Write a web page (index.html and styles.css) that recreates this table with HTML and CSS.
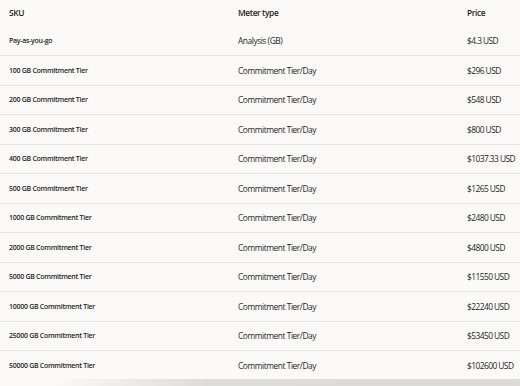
FILE: index.html
```html
<!DOCTYPE html>
<html>
<head>
<meta charset="utf-8">
<link rel="stylesheet" href="styles.css">
</head>
<body>
<div class="table">
  <div class="row head"><div class="c sku">SKU</div><div class="c meter">Meter type</div><div class="c price">Price</div></div>
  <div class="row first"><div class="c sku">Pay-as-you-go</div><div class="c meter">Analysis (GB)</div><div class="c price">$4.3 USD</div></div>
  <div class="row"><div class="c sku">100 GB Commitment Tier</div><div class="c meter">Commitment Tier/Day</div><div class="c price">$296 USD</div></div>
  <div class="row"><div class="c sku">200 GB Commitment Tier</div><div class="c meter">Commitment Tier/Day</div><div class="c price">$548 USD</div></div>
  <div class="row"><div class="c sku">300 GB Commitment Tier</div><div class="c meter">Commitment Tier/Day</div><div class="c price">$800 USD</div></div>
  <div class="row"><div class="c sku">400 GB Commitment Tier</div><div class="c meter">Commitment Tier/Day</div><div class="c price">$1037.33 USD</div></div>
  <div class="row"><div class="c sku">500 GB Commitment Tier</div><div class="c meter">Commitment Tier/Day</div><div class="c price">$1265 USD</div></div>
  <div class="row"><div class="c sku">1000 GB Commitment Tier</div><div class="c meter">Commitment Tier/Day</div><div class="c price">$2480 USD</div></div>
  <div class="row"><div class="c sku">2000 GB Commitment Tier</div><div class="c meter">Commitment Tier/Day</div><div class="c price">$4800 USD</div></div>
  <div class="row"><div class="c sku">5000 GB Commitment Tier</div><div class="c meter">Commitment Tier/Day</div><div class="c price">$11550 USD</div></div>
  <div class="row"><div class="c sku">10000 GB Commitment Tier</div><div class="c meter">Commitment Tier/Day</div><div class="c price">$22240 USD</div></div>
  <div class="row"><div class="c sku">25000 GB Commitment Tier</div><div class="c meter">Commitment Tier/Day</div><div class="c price">$53450 USD</div></div>
  <div class="row"><div class="c sku">50000 GB Commitment Tier</div><div class="c meter">Commitment Tier/Day</div><div class="c price">$102600 USD</div></div>
</div>
<div class="shade"></div>
</body>
</html>
```
FILE: styles.css
```css
html, body {
  margin: 0;
  padding: 0;
  background: #fbfaf8;
  overflow: hidden;
}
body {
  width: 520px;
  height: 386px;
  position: relative;
  font-family: "Open Sans", "Noto Sans", sans-serif;
  color: #1e1e1e;
}
.table {
  display: flex;
  flex-direction: column;
}
.row {
  display: grid;
  grid-template-columns: 229px 229px 1fr;
  height: 29.5px;
  align-items: center;
  border-top: 1px solid #e6e6e4;
  box-sizing: border-box;
}
.row.head {
  height: 25.5px;
  border-top: none;
}
.row.first {
  border-top: none;
}
.c {
  padding-left: 9px;
  white-space: nowrap;
}
.meter {
  font-size: 8.4px;
  letter-spacing: -0.45px;
}
.price {
  font-size: 8.4px;
  letter-spacing: -0.55px;
}
.sku {
  font-size: 7px;
  font-weight: 600;
  letter-spacing: -0.28px;
}
.head .c {
  font-size: 8.4px;
  font-weight: 600;
  letter-spacing: -0.4px;
}
.shade {
  position: absolute;
  left: 0;
  right: 0;
  bottom: 0;
  height: 7px;
  background: linear-gradient(to right, rgba(200,200,198,0) 10%, rgba(200,200,198,0.6) 40%, rgba(205,205,203,0.7) 100%);
}
```
